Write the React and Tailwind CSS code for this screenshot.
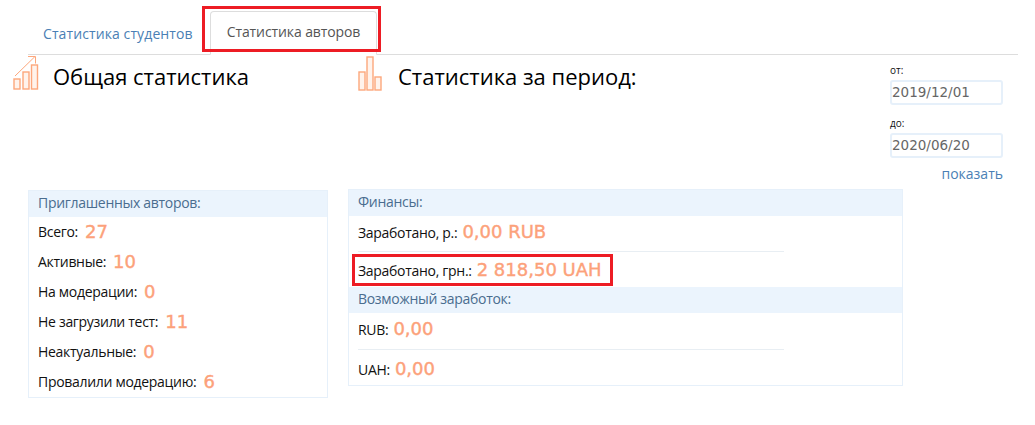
import React from 'react';

const textFont = "font-['Open_Sans','Noto_Sans',sans-serif]";
const numFont = "font-['DejaVu_Sans','Liberation_Sans',sans-serif]";

function GrowthIcon() {
  return (
    <svg width="26" height="36" viewBox="0 0 26 36" fill="none" stroke="#fda77c" strokeWidth="1.4" className="shrink-0">
      <rect x="1" y="24" width="6" height="10" fill="#fff3ec" />
      <rect x="10" y="17" width="6" height="17" fill="#fff3ec" />
      <rect x="18.5" y="10" width="6" height="24" fill="#fff3ec" />
      <path d="M2 21 L22 1.5 M15 1.5 H22.5 V8.5" strokeWidth="1" />
    </svg>
  );
}

function BarsIcon() {
  return (
    <svg width="24" height="35" viewBox="0 0 24 35" fill="none" stroke="#fda77c" strokeWidth="1.4" className="shrink-0">
      <rect x="1" y="16" width="6" height="18" fill="#fff3ec" />
      <rect x="9" y="1" width="6" height="33" fill="#fff3ec" />
      <rect x="17" y="21" width="6" height="13" fill="#fff3ec" />
    </svg>
  );
}

function Stat({ label, value, className = '', gap = 'ml-[5px]' }) {
  return (
    <div className={`flex items-baseline text-[14px] text-[#111] tracking-[-0.3px] ${className}`}>
      <span>{label}:</span>
      <span className={`${gap} text-[18px] font-normal tracking-[0px] text-[#fca17a] [-webkit-text-stroke:0.4px_#fca17a] ${numFont}`}>{value}</span>
    </div>
  );
}

function CardHeader({ children }) {
  return (
    <div className="h-[26px] bg-[#ebf4fd] pl-[9px] text-[14px] leading-[24px] text-[#4a6d8f] tracking-[-0.3px]">
      {children}
    </div>
  );
}

function DateField({ label, value }) {
  return (
    <div>
      <div className="h-[17px] text-[10px] leading-[14px] text-[#111]">{label}</div>
      <div className={`flex h-[25px] w-[113px] items-center rounded-[3px] border-2 border-[#e6f0fa] text-[13.5px] text-[#666] ${numFont}`}>
        {value}
      </div>
    </div>
  );
}

export default function App() {
  const authors = [
    ['Всего', '27'],
    ['Активные', '10'],
    ['На модерации', '0'],
    ['Не загрузили тест', '11'],
    ['Неактуальные', '0'],
    ['Провалили модерацию', '6'],
  ];

  return (
    <div className={`h-[425px] w-[1035px] overflow-hidden bg-white ${textFont}`}>
      {/* Tabs */}
      <div className="ml-[28px] flex h-[55px] w-[990px] items-end border-b border-[#dddddd]">
        <a className="mb-[-1px] flex h-[41px] w-[182px] items-start pl-[15px] pt-[10px] text-[14px] leading-[20px] text-[#4a7fb5] tracking-[0.1px]">
          Статистика студентов
        </a>
        <div className="relative mb-[-1px] flex h-[44px] w-[167px] items-start justify-center rounded-t border border-b-white border-[#dddddd] bg-white pt-[10px] text-[14px] leading-[20px] text-[#555] tracking-[-0.1px]">
          Статистика авторов
          <div className="absolute bottom-[2px] left-[-9px] right-[-5px] top-[-6px] border-[3px] border-[#ed1c24]" />
        </div>
      </div>

      <div className="flex">
        {/* Left column */}
        <div className="ml-[13px] w-[335px] shrink-0">
          <div className="flex h-[135px] items-start">
            <GrowthIcon />
            <h2 className="ml-[14px] mt-[5px] text-[22px] leading-[32px] text-black">Общая статистика</h2>
          </div>
          <div className="ml-[15px] w-[300px] border border-[#e6f0fa]">
            <CardHeader>Приглашенных авторов:</CardHeader>
            <div className="flex flex-col pl-[9px]">
              {authors.map(([label, value]) => (
                <Stat key={label} label={label} value={value} gap="ml-[7px]" className="h-[30px] items-center pb-[2px]" />
              ))}
            </div>
          </div>
        </div>

        {/* Right column */}
        <div className="w-[555px] shrink-0">
          <div className="flex h-[134px] items-start">
            <div className="ml-[10px] mt-px">
              <BarsIcon />
            </div>
            <h2 className="ml-[16px] mt-[5px] text-[22px] leading-[32px] text-black">Статистика за период:</h2>
          </div>
          <div className="w-[555px] border border-[#e6f0fa]">
            <CardHeader>Финансы:</CardHeader>
            <div className="ml-[9px] w-[426px] border-b border-[#e8eef3] pb-[7px] pt-[2px]">
              <Stat label="Заработано, р." value="0,00 RUB" className="h-[26px]" />
            </div>
            <div className="relative ml-[9px] h-[35px] pt-[4px]">
              <Stat label="Заработано, грн." value="2 818,50 UAH" />
              <div className="absolute left-[-6px] top-[2px] h-[32px] w-[261px] border-[3px] border-[#ed1c24]" />
            </div>
            <CardHeader>Возможный заработок:</CardHeader>
            <div className="ml-[9px] w-[426px] border-b border-[#e8eef3] pb-[8px] pt-[2px]">
              <Stat label="RUB" value="0,00" className="h-[26px]" />
            </div>
            <div className="ml-[9px] h-[35px] pt-[5px]">
              <Stat label="UAH" value="0,00" />
            </div>
          </div>
        </div>

        {/* Date filter */}
        <div className="flex-1">
          <div className="ml-[-13px] mt-[8px] flex w-[113px] flex-col">
            <DateField label="от:" value="2019/12/01" />
            <div className="h-[11px]" />
            <DateField label="до:" value="2020/06/20" />
            <a className="mt-[6px] self-end text-[14px] leading-[20px] text-[#4a7fb5]">показать</a>
          </div>
        </div>
      </div>
    </div>
  );
}
